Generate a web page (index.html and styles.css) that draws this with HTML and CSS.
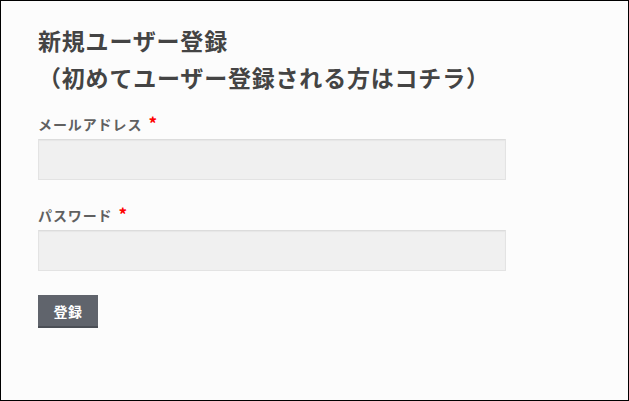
FILE: index.html
```html
<!DOCTYPE html>
<html lang="ja">
<head>
    <meta charset="UTF-8">
    <meta name="viewport" content="width=device-width, initial-scale=1.0">
    <title>新規ユーザー登録</title>
    <link rel="stylesheet" href="styles.css">
</head>
<body>

    <div class="container">
        <h2>新規ユーザー登録<br>（初めてユーザー登録される方はコチラ）</h2>
        <form id="signup-form">
            <label for="signup-email">メールアドレス <span class="required">*</span></label>
            <input type="email" id="signup-email">

            <label for="signup-password">パスワード <span class="required">*</span></label>
            <input type="password" id="signup-password">

            <button type="submit">登録</button>
        </form>
    </div>

</body>
</html>
```

FILE: styles.css
```css
body {
    font-family: "Noto Sans CJK JP", "Noto Sans", sans-serif;
    background-color: #fcfcfc;
    margin: 0;
}

.container {
    box-sizing: border-box;
    width: 629px;
    height: 401px;
    border: 1px solid #000;
    padding: 21px 37px;
}

h2 {
    font-size: 23px;
    line-height: 37px;
    letter-spacing: 0.8px;
    font-weight: bold;
    color: #444;
    margin: 0 0 17px 0;
}

label {
    display: block;
    font-size: 14px;
    font-weight: bold;
    color: #606060;
    line-height: 20px;
    letter-spacing: 0.9px;
    margin-bottom: 5px;
}

.required {
    color: #f00;
    font-size: 17px;
    margin-left: 2px;
}

input {
    display: block;
    box-sizing: border-box;
    width: 468px;
    height: 41px;
    margin: 0 0 24px 0;
    border: 1px solid #e3e3e3;
    border-top-color: #dcdcdc;
    background-color: #f0f0f0;
    box-shadow: inset 0 1px 1px rgba(0, 0, 0, 0.04);
    font-size: 14px;
}

input:focus {
    outline: none;
}

button {
    display: block;
    width: 60px;
    height: 33px;
    padding: 0;
    background-color: #60646c;
    color: #fff;
    font-family: inherit;
    font-size: 14px;
    font-weight: bold;
    letter-spacing: 0.5px;
    border: none;
    border-bottom: 2px solid #4b4f56;
    cursor: pointer;
}
```
